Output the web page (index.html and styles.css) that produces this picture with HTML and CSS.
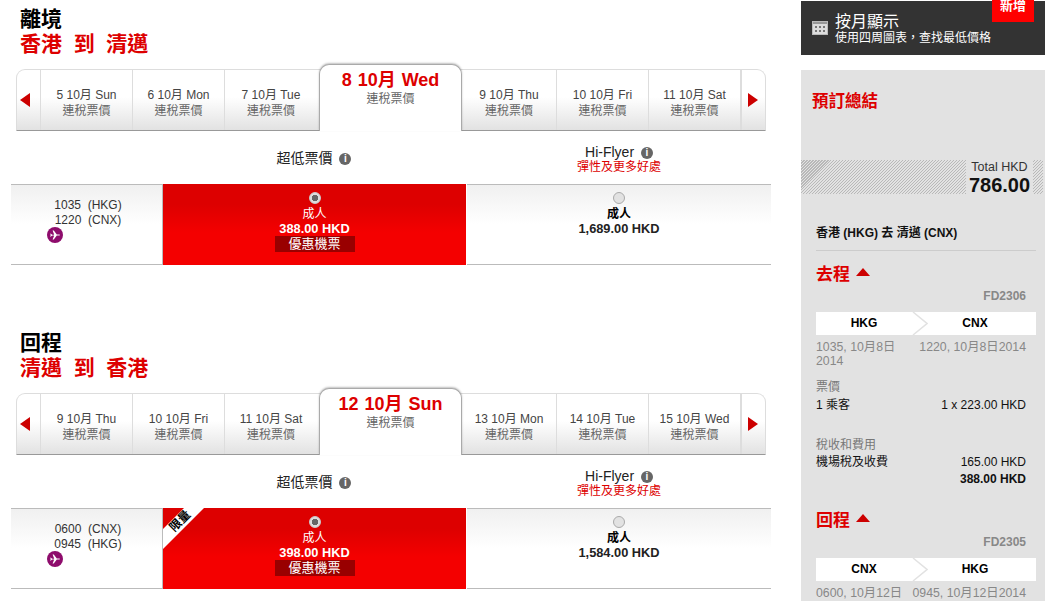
FILE: index.html
```html
<!DOCTYPE html>
<html lang="zh-Hant">
<head>
<meta charset="utf-8">
<title>航班選擇</title>
<link rel="stylesheet" href="styles.css">
</head>
<body>
<div class="page">
  <main class="main">
    <section class="leg">
      <h1 class="leg-title">離境</h1>
      <h2 class="leg-route">香港  到  清邁</h2>
      <div class="strip">
        <div class="arrow arrow-left"><svg width="10" height="14" viewBox="0 0 10 14"><path d="M10 0V14L0 7Z" fill="#c00"/></svg></div>
        <div class="day"><span class="day-date">5 10月 Sun</span><span class="day-note">連稅票價</span></div>
        <div class="day"><span class="day-date">6 10月 Mon</span><span class="day-note">連稅票價</span></div>
        <div class="day"><span class="day-date">7 10月 Tue</span><span class="day-note">連稅票價</span></div>
        <div class="day-active"><span class="active-date">8 10月 Wed</span><span class="day-note">連稅票價</span></div>
        <div class="day day-wide"><span class="day-date">9 10月 Thu</span><span class="day-note">連稅票價</span></div>
        <div class="day"><span class="day-date">10 10月 Fri</span><span class="day-note">連稅票價</span></div>
        <div class="day"><span class="day-date">11 10月 Sat</span><span class="day-note">連稅票價</span></div>
        <div class="arrow arrow-right"><svg width="10" height="14" viewBox="0 0 10 14"><path d="M0 0V14L10 7Z" fill="#c00"/></svg></div>
      </div>
      <div class="fare-heads">
        <div class="fare-head"><div class="fare-name">超低票價 <span class="info">i</span></div></div>
        <div class="fare-head"><div class="fare-name">Hi-Flyer <span class="info">i</span></div><div class="fare-sub">彈性及更多好處</div></div>
      </div>
      <div class="row">
        <div class="times">
          <div class="time-line">1035  (HKG)</div>
          <div class="time-line">1220  (CNX)</div>
          <svg class="plane" width="16" height="16" viewBox="0 0 16 16"><circle cx="8" cy="8" r="8" fill="#8e0c6c"/><path d="M3 6.800h.9l1.300 1 2-.1L5.600 3.600h1.200l3 4h2.300c.6 0 1 .2 1 .5s-.4.5-1 .5H9.800l-3 3.800H5.600l1.600-3.900-2-.1-1.300 1H3l.8-1.500z" fill="#fff"/></svg>
        </div>
        <div class="fare fare-sale">
          <span class="radio radio-on"></span>
          <span class="pax-sale">成人</span>
          <span class="price">388.00 HKD</span>
          <span class="promo">優惠機票</span>
        </div>
        <div class="fare fare-plain">
          <span class="radio"></span>
          <span class="pax">成人</span>
          <span class="price">1,689.00 HKD</span>
        </div>
      </div>
    </section>

    <section class="leg">
      <h1 class="leg-title">回程</h1>
      <h2 class="leg-route">清邁  到  香港</h2>
      <div class="strip">
        <div class="arrow arrow-left"><svg width="10" height="14" viewBox="0 0 10 14"><path d="M10 0V14L0 7Z" fill="#c00"/></svg></div>
        <div class="day"><span class="day-date">9 10月 Thu</span><span class="day-note">連稅票價</span></div>
        <div class="day"><span class="day-date">10 10月 Fri</span><span class="day-note">連稅票價</span></div>
        <div class="day"><span class="day-date">11 10月 Sat</span><span class="day-note">連稅票價</span></div>
        <div class="day-active"><span class="active-date">12 10月 Sun</span><span class="day-note">連稅票價</span></div>
        <div class="day day-wide"><span class="day-date">13 10月 Mon</span><span class="day-note">連稅票價</span></div>
        <div class="day"><span class="day-date">14 10月 Tue</span><span class="day-note">連稅票價</span></div>
        <div class="day"><span class="day-date">15 10月 Wed</span><span class="day-note">連稅票價</span></div>
        <div class="arrow arrow-right"><svg width="10" height="14" viewBox="0 0 10 14"><path d="M0 0V14L10 7Z" fill="#c00"/></svg></div>
      </div>
      <div class="fare-heads">
        <div class="fare-head"><div class="fare-name">超低票價 <span class="info">i</span></div></div>
        <div class="fare-head"><div class="fare-name">Hi-Flyer <span class="info">i</span></div><div class="fare-sub">彈性及更多好處</div></div>
      </div>
      <div class="row">
        <div class="times">
          <div class="time-line">0600  (CNX)</div>
          <div class="time-line">0945  (HKG)</div>
          <svg class="plane" width="16" height="16" viewBox="0 0 16 16"><circle cx="8" cy="8" r="8" fill="#8e0c6c"/><path d="M3 6.800h.9l1.300 1 2-.1L5.600 3.600h1.200l3 4h2.300c.6 0 1 .2 1 .5s-.4.5-1 .5H9.800l-3 3.800H5.600l1.600-3.900-2-.1-1.300 1H3l.8-1.500z" fill="#fff"/></svg>
        </div>
        <div class="fare fare-sale">
          <svg class="ribbon" width="42" height="42" viewBox="0 0 42 42"><path d="M21 0H41L0 41V21Z" fill="#fff"/></svg>
          <span class="ribbon-text">限量</span>
          <span class="radio radio-on"></span>
          <span class="pax-sale">成人</span>
          <span class="price">398.00 HKD</span>
          <span class="promo">優惠機票</span>
        </div>
        <div class="fare fare-plain">
          <span class="radio"></span>
          <span class="pax">成人</span>
          <span class="price">1,584.00 HKD</span>
        </div>
      </div>
    </section>
  </main>

  <aside class="side">
    <div class="month-box">
      <svg class="cal" width="16" height="14" viewBox="0 0 16 14"><rect width="16" height="14" fill="#bbb"/><rect x="1" y="1" width="14" height="12" fill="#ddd"/><rect x="1" y="1" width="14" height="2" fill="#999"/><path d="M3 5h2v2H3zM7 5h2v2H7zM11 5h2v2h-2zM3 9h2v2H3zM7 9h2v2H7zM11 9h2v2h-2z" fill="#777"/></svg>
      <div class="month-text">
        <div class="month-title">按月顯示</div>
        <div class="month-sub">使用四周圖表，查找最低價格</div>
      </div>
      <span class="new-badge">新增</span>
    </div>

    <div class="summary">
      <h3 class="summary-title">預訂總結</h3>
      <div class="total-band">
        <div class="total-box">
          <div class="total-label">Total HKD</div>
          <div class="total-num">786.00</div>
        </div>
      </div>
      <div class="trip">
        <div class="trip-name">香港 (HKG) 去 清邁 (CNX)</div>

        <h4 class="dir dir-first">去程 <svg width="14" height="8" viewBox="0 0 14 8"><path d="M7 0 14 8H0Z" fill="#c00"/></svg></h4>
        <div class="flight">FD2306</div>
        <div class="route">
          <span>HKG</span><span>CNX</span>
          <svg class="chev" width="16" height="23" viewBox="0 0 16 23"><path d="M1 0 15 11.500 1 23" fill="none" stroke="#e2e2e2" stroke-width="1.500"/></svg>
        </div>
        <div class="when"><span class="when-a">1035, 10月8日 2014</span><span class="when-b">1220, 10月8日2014</span></div>
        <div class="cost-label cost-fare">票價</div>
        <div class="cost"><span>1 乘客</span><span>1 x 223.00 HKD</span></div>
        <div class="cost-label cost-tax">稅收和費用</div>
        <div class="cost cost-fees"><span>機場稅及收費</span><span>165.00 HKD</span></div>
        <div class="cost-total">388.00 HKD</div>

        <h4 class="dir dir-second">回程 <svg width="14" height="8" viewBox="0 0 14 8"><path d="M7 0 14 8H0Z" fill="#c00"/></svg></h4>
        <div class="flight">FD2305</div>
        <div class="route">
          <span>CNX</span><span>HKG</span>
          <svg class="chev" width="16" height="23" viewBox="0 0 16 23"><path d="M1 0 15 11.500 1 23" fill="none" stroke="#e2e2e2" stroke-width="1.500"/></svg>
        </div>
        <div class="when when-tight"><span>0600, 10月12日</span><span>0945, 10月12日2014</span></div>
      </div>
    </div>
  </aside>
</div>
</body>
</html>
```
FILE: styles.css
```css
* { box-sizing: border-box; }
html, body { margin: 0; height: 601px; overflow: hidden; background: #fff; }
body { font-family: "Liberation Sans", "Noto Sans CJK TC", sans-serif; font-size: 12px; color: #000; }
h1, h2, h3, h4 { margin: 0; }

.page { display: flex; align-items: flex-start; height: 601px; overflow: hidden; }
.main { width: 771px; padding-left: 11px; flex: none; }

.leg { height: 324px; padding-top: 7px; }
.leg-title { font-size: 21px; line-height: 24px; font-weight: 700; padding-left: 9px; }
.leg-route { font-size: 21px; line-height: 26px; font-weight: 700; color: #d00; padding-left: 9px; white-space: pre; }

.strip {
  display: flex; align-items: stretch; height: 62px; margin: 12px 5px 0; width: 750px;
  border: 1px solid #ddd; border-bottom: 1px solid #999; border-radius: 9px 9px 0 0;
  background: linear-gradient(#fff 0%, #fff 45%, #e2e2e2 100%);
}
.arrow { width: 24px; display: flex; align-items: center; flex: none; }
.arrow-left { padding-left: 3px; border-right: 1px solid #ddd; }
.arrow-right { padding-left: 6px; border-left: 1px solid #ddd; width: 24px; }
.day {
  width: 92px; flex: none; display: flex; flex-direction: column; align-items: center;
  padding-top: 18px; border-right: 1px solid #ddd; color: #555;
}
.day:nth-of-type(4), .day:last-of-type { border-right: 0; }
.day-wide { width: 95px; }
.day-date { font-size: 12px; line-height: 15px; color: #444; white-space: nowrap; }
.day-note { font-size: 12px; line-height: 16px; color: #666; white-space: nowrap; }
.day-active {
  width: 143px; flex: none; margin: -6px 0 -1px 2px; padding-top: 5px; background: #fff;
  border: 1px solid #aaa; border-bottom: 0; border-radius: 10px 10px 0 0;
  box-shadow: 0 -1px 2px rgba(0, 0, 0, .25);
  display: flex; flex-direction: column; align-items: center; text-align: center;
}
.active-date { font-size: 18px; line-height: 21px; font-weight: 700; color: #d00; white-space: nowrap; word-spacing: 1px; }

.fare-heads { display: flex; padding-left: 152px; height: 53px; padding-top: 14px; }
.fare-head { width: 304px; text-align: center; }
.fare-name { font-size: 14px; line-height: 15px; color: #222; }
.fare-head:first-child .fare-name { padding-top: 6px; padding-right: 2px; }
.fare-sub { font-size: 12px; line-height: 15px; color: #d00; }
.info {
  display: inline-block; width: 12px; height: 12px; margin-left: 3px; border-radius: 50%; background: #666; color: #fff;
  font-size: 10px; line-height: 12px; font-weight: 700; text-align: center; vertical-align: 1px;
}

.row { display: flex; height: 81px; width: 760px; border-top: 1px solid #bbb; border-bottom: 1px solid #bbb; }
.times {
  width: 152px; flex: none; padding-top: 13px; border-right: 1px solid #bbb; position: relative;
  background: linear-gradient(#f0f0f0, #fff 50%); text-align: center; padding-left: 3px;
}
.time-line { line-height: 15px; color: #333; white-space: pre; }
.plane { position: absolute; left: 36px; top: 42px; }

.fare { display: flex; flex-direction: column; align-items: center; padding-top: 7px; flex: none; position: relative; }
.fare-sale { width: 304px; color: #fff; background: linear-gradient(#dd0000 25%, #f40000 60%); border-right: 1px solid #fff; margin-top: -1px; margin-bottom: -1px; padding-top: 8px; }
.fare-plain { width: 304px; background: linear-gradient(#f0f0f0, #fff 50%); }
.radio { width: 12px; height: 12px; border-radius: 50%; background: #e2e2e2; border: 1px solid #aaa; margin-bottom: 3px; }
.radio-on { background: radial-gradient(circle, #666 0 3px, #ddd 3.500px); border-color: #ccc; }
.pax-sale { line-height: 15px; }
.pax { line-height: 15px; font-weight: 700; }
.price { font-weight: 700; line-height: 14px; font-size: 12.800px; }
.promo { display: block; width: 80px; height: 16px; margin-top: 0; background: #990000; font-size: 13px; line-height: 16px; text-align: center; }
.fare-plain .price { color: #222; }

.ribbon { position: absolute; left: 0; top: 0; }
.ribbon-text { position: absolute; left: 3px; top: 6px; width: 28px; text-align: center; font-size: 12px; line-height: 14px; font-weight: 700; color: #000; transform: rotate(-45deg); }

.side { width: 244px; margin-left: 30px; flex: none; padding-top: 1px; }
.month-box { height: 54px; background: #333; color: #fff; display: flex; align-items: center; padding: 2px 0 0 11px; position: relative; }
.cal { margin-right: 7px; margin-top: -2px; }
.month-title { font-size: 16px; line-height: 18px; }
.month-sub { font-size: 12px; line-height: 14px; }
.new-badge { position: absolute; right: 11px; top: -1px; width: 42px; height: 22px; background: #f00; color: #fff; font-weight: 700; font-size: 13px; line-height: 12px; text-align: center; }

.summary { background: #e2e2e2; height: 540px; margin-top: 15px; padding-top: 21px; }
.summary-title { font-size: 16.500px; line-height: 20px; font-weight: 700; color: #d00; padding-left: 11px; }
.total-band {
  margin-top: 49px; width: 242px; height: 34px; display: flex; justify-content: flex-end; padding-right: 10px;
  background: repeating-linear-gradient(135deg, #b8b8b8 0, #b8b8b8 .71px, #e2e2e2 .71px, #e2e2e2 2.121px);
}
.total-box { width: 67px; background: #e2e2e2; text-align: center; }
.total-label { font-size: 12.500px; line-height: 15px; color: #333; }
.total-num { font-size: 20px; line-height: 20px; font-weight: 700; color: #111; }

.trip { width: 220px; margin-left: 15px; }
.trip-name { font-weight: 700; line-height: 14px; margin-top: 32px; padding-bottom: 10px; border-bottom: 1px solid #ccc; color: #111; }
.dir { font-size: 17px; line-height: 20px; font-weight: 700; color: #d00; }
.dir svg { vertical-align: 4px; margin-left: 1px; }
.dir-first { margin-top: 14px; }
.dir-second { margin-top: 25px; }
.flight { text-align: right; font-weight: 700; color: #888; line-height: 14px; padding-right: 10px; margin-top: 4px; }
.route { display: flex; height: 23px; margin-top: 9px; background: #fff; position: relative; font-weight: 700; line-height: 23px; }
.route span { text-align: center; }
.route span:first-child { width: 96px; }
.route span:nth-child(2) { width: 124px; padding-left: 2px; }
.chev { position: absolute; left: 96px; top: 0; }
.when { display: flex; font-size: 12.300px; color: #888; line-height: 14px; margin-top: 5px; justify-content: space-between; padding-right: 10px; }
.when-a { width: 90px; }
.when-b { white-space: nowrap; }
.when-tight { white-space: nowrap; }
.cost-label { color: #777; line-height: 14px; }
.cost-fare { margin-top: 12px; }
.cost-tax { margin-top: 26px; }
.cost { display: flex; justify-content: space-between; padding-right: 10px; line-height: 14px; margin-top: 4px; color: #111; }
.cost-fees { margin-top: 3px; }
.cost-total { text-align: right; font-weight: 700; padding-right: 10px; line-height: 14px; margin-top: 3px; color: #111; }
```
